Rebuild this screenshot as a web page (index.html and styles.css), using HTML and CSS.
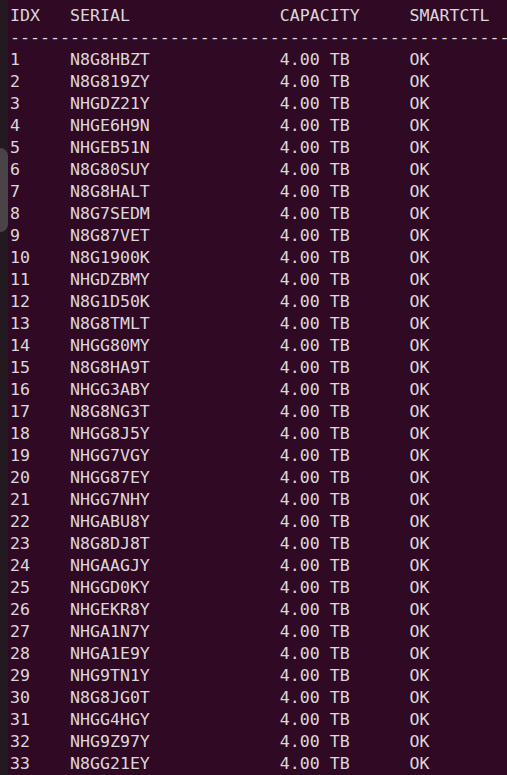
FILE: index.html
```html
<!DOCTYPE html>
<html>
<head>
<meta charset="utf-8">
<link rel="stylesheet" href="styles.css">
</head>
<body>
<div class="window">
  <div class="gutter"><div class="grip"></div></div>
  <div class="term">
<pre class="out">IDX   SERIAL               CAPACITY     SMARTCTL
-----------------------------------------------------------
1     N8G8HBZT             4.00 TB      OK
2     N8G819ZY             4.00 TB      OK
3     NHGDZ21Y             4.00 TB      OK
4     NHGE6H9N             4.00 TB      OK
5     NHGEB51N             4.00 TB      OK
6     N8G80SUY             4.00 TB      OK
7     N8G8HALT             4.00 TB      OK
8     N8G7SEDM             4.00 TB      OK
9     N8G87VET             4.00 TB      OK
10    N8G1900K             4.00 TB      OK
11    NHGDZBMY             4.00 TB      OK
12    N8G1D50K             4.00 TB      OK
13    N8G8TMLT             4.00 TB      OK
14    NHGG80MY             4.00 TB      OK
15    N8G8HA9T             4.00 TB      OK
16    NHGG3ABY             4.00 TB      OK
17    N8G8NG3T             4.00 TB      OK
18    NHGG8J5Y             4.00 TB      OK
19    NHGG7VGY             4.00 TB      OK
20    NHGG87EY             4.00 TB      OK
21    NHGG7NHY             4.00 TB      OK
22    NHGABU8Y             4.00 TB      OK
23    N8G8DJ8T             4.00 TB      OK
24    NHGAAGJY             4.00 TB      OK
25    NHGGD0KY             4.00 TB      OK
26    NHGEKR8Y             4.00 TB      OK
27    NHGA1N7Y             4.00 TB      OK
28    NHGA1E9Y             4.00 TB      OK
29    NHG9TN1Y             4.00 TB      OK
30    N8G8JG0T             4.00 TB      OK
31    NHGG4HGY             4.00 TB      OK
32    NHG9Z97Y             4.00 TB      OK
33    N8GG21EY             4.00 TB      OK</pre>
  </div>
</div>
</body>
</html>
```
FILE: styles.css
```css
html, body {
  margin: 0;
  padding: 0;
  height: 100%;
  background: #300a24;
  overflow: hidden;
}
.window {
  display: flex;
  height: 775px;
}
.gutter {
  width: 8px;
  flex: none;
  background: #221a20;
  display: flex;
  flex-direction: column;
}
.grip {
  margin-top: 148px;
  height: 84px;
  background: #4a4448;
  border-radius: 0 8px 8px 0;
}
.term {
  flex: 1;
  min-width: 0;
  overflow: hidden;
  background: #300a24;
  padding: 5px 0 0 2px;
}
.out {
  margin: 0;
  font-family: "DejaVu Sans Mono", monospace;
  font-size: 16.6px;
  line-height: 22px;
  color: #dcd7dc;
  white-space: pre;
}
```
